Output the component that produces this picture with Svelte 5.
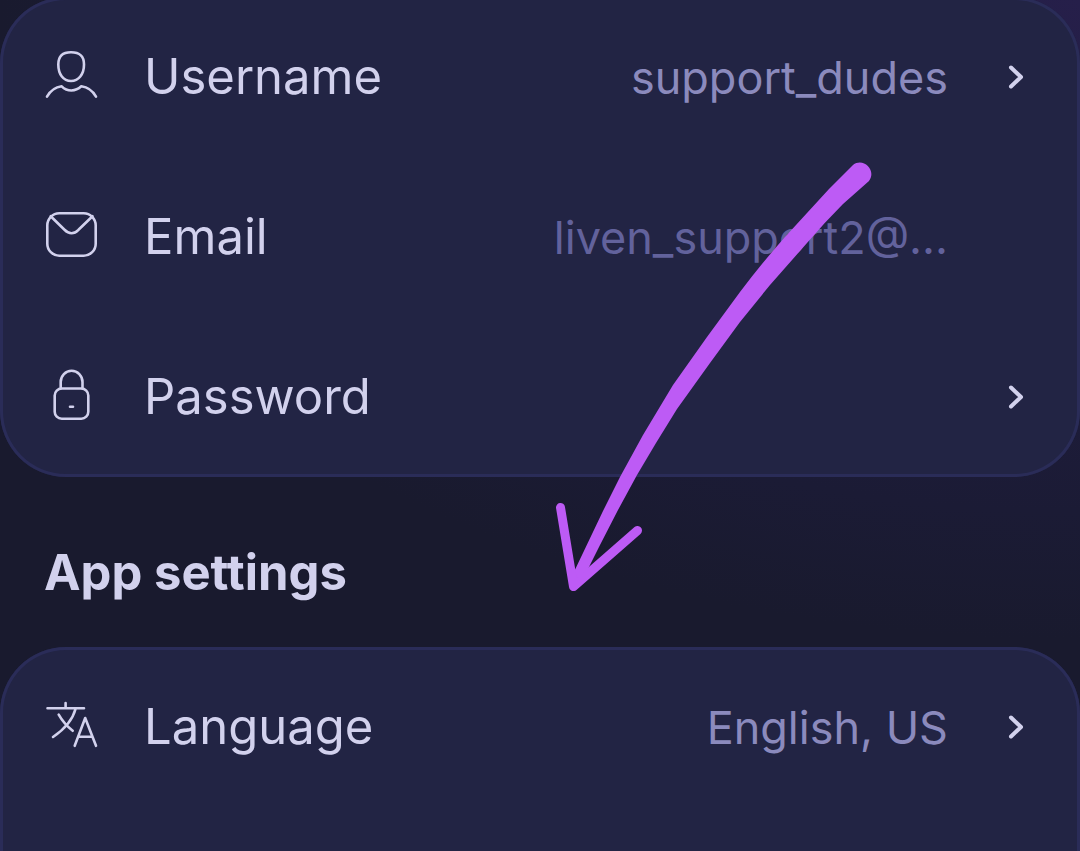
<script lang="ts">
	type Icon = 'user' | 'mail' | 'lock' | 'language';
	type Item = { icon: Icon; label: string; value?: string; locked?: boolean };

	const account: Item[] = [
		{ icon: 'user', label: 'Username', value: 'support_dudes' },
		{ icon: 'mail', label: 'Email', value: 'liven_support2@...', locked: true },
		{ icon: 'lock', label: 'Password' }
	];
	const app: Item[] = [{ icon: 'language', label: 'Language', value: 'English, US' }];
</script>

{#snippet content(item: Item)}
	<svg class="icon" viewBox="0 0 56 56" aria-hidden="true">
		{#if item.icon === 'user'}
			<path d="M27 3.300C36 3.300 40 7 40 15.500C40 25.500 34.500 32 27 32S14.300 25.500 14.300 15.500C14.300 7 18.500 3.300 27 3.300Z" />
			<path d="M3 47.600C6.500 41.500 11.500 38.200 17.700 37.300c5.500 5.500 13.800 5.500 19.600 0C43.500 38.200 48.500 41.500 52 47.600" />
		{:else if item.icon === 'mail'}
			<rect x="3.3" y="4.3" width="48.4" height="42.4" rx="12" />
			<path d="M6.700 7.200 20.500 20.800c4.500 4.600 9.500 4.600 14 0L48.500 7.200" />
		{:else if item.icon === 'lock'}
			<rect x="10.700" y="19.500" width="33.600" height="30.200" rx="7" />
			<path d="M16.700 19.500v-6.500a10.900 11.200 0 0 1 21.800 0v6.500M26 37.700h3" />
		{:else}
			<path d="M3.500 9.200H40M21.600 4v5M31.500 10C28.500 21.500 20 30.500 9 38M14.700 15.700C18 21.500 22.500 27 28.700 31.800" />
			<path d="M30.700 46.800 41.200 19 52 46.800M34.300 37.800h14" />
		{/if}
	</svg>
	<span class="label">{item.label}</span>
	<span class="value" class:locked={item.locked}>{item.value ?? ''}</span>
	{#if !item.locked}
		<svg class="chevron" viewBox="0 0 44 44" aria-hidden="true">
			<path d="m19 12.500 10 9.500-10 9.500" />
		</svg>
	{/if}
{/snippet}

{#snippet rows(items: Item[])}
	{#each items as item}
		{#if item.locked}
			<div class="row">{@render content(item)}</div>
		{:else}
			<button type="button" class="row">{@render content(item)}</button>
		{/if}
	{/each}
{/snippet}

<main>
	<section class="card">{@render rows(account)}</section>
	<h2>App settings</h2>
	<section class="card more">{@render rows(app)}</section>

	<svg class="arrow" viewBox="0 0 1080 851" aria-hidden="true">
		<path
			class="shaft"
			d="M853 165Q829 188 807 213L785 237Q762 263 740 292L707 337L673 385L643 435L620 477L603 511L572 576L580 583L587 571L600 545L618 510L637 475L656 443L677 409L710 363L740 322L770 285L807 243Q824 223 843 204L869 181C877 170 863 157 853 165Z"
		/>
		<path class="head" d="M560.500 507.500 573.500 586.500 637.500 530.500" />
	</svg>
</main>

<style>
	:global(body) {
		margin: 0;
		background: #191a2e;
	}

	main {
		position: relative;
		box-sizing: border-box;
		height: 100vh;
		overflow: hidden;
		background: radial-gradient(ellipse 1080px 640px at 100% 0, #261f4a, #1b1b35 80%, #191a2e);
		font-family: Inter, 'Liberation Sans', sans-serif;
		color: #d2d1ed;
	}

	.card {
		border-radius: 66px;
		background: #222444;
		box-shadow: inset 0 0 0 3px #2a2c58;
	}

	.card:first-child {
		margin-top: -3px;
	}

	.more {
		padding-bottom: 160px;
	}

	.row {
		display: grid;
		grid-template-columns: 56px auto 1fr 44px;
		align-items: baseline;
		align-content: center;
		column-gap: 44px;
		box-sizing: border-box;
		width: 100%;
		height: 160px;
		padding: 0 44px;
		border: 0;
		background: none;
		color: inherit;
		font: inherit;
		text-align: left;
	}

	.icon,
	.chevron {
		align-self: center;
		fill: none;
		stroke: currentColor;
		stroke-linecap: round;
		stroke-linejoin: round;
	}

	.icon {
		width: 56px;
		height: 56px;
		stroke-width: 2.6;
	}

	.chevron {
		width: 44px;
		height: 44px;
		stroke-width: 4;
	}

	.label {
		font-size: 49px;
		line-height: 60px;
	}

	.value {
		font-size: 45px;
		line-height: 56px;
		text-align: right;
		white-space: nowrap;
		color: #8b8abd;
	}

	.locked {
		color: #62629c;
	}

	h2 {
		margin: 0;
		padding: 66px 44px 44px;
		font-size: 49px;
		line-height: 60px;
		font-weight: 700;
	}

	.arrow {
		position: absolute;
		top: 0;
		left: 0;
		width: 1080px;
		height: 851px;
		pointer-events: none;
	}

	.shaft {
		fill: #bd5bf5;
	}

	.head {
		fill: none;
		stroke: #bd5bf5;
		stroke-width: 9;
		stroke-linecap: round;
		stroke-linejoin: round;
	}
</style>
